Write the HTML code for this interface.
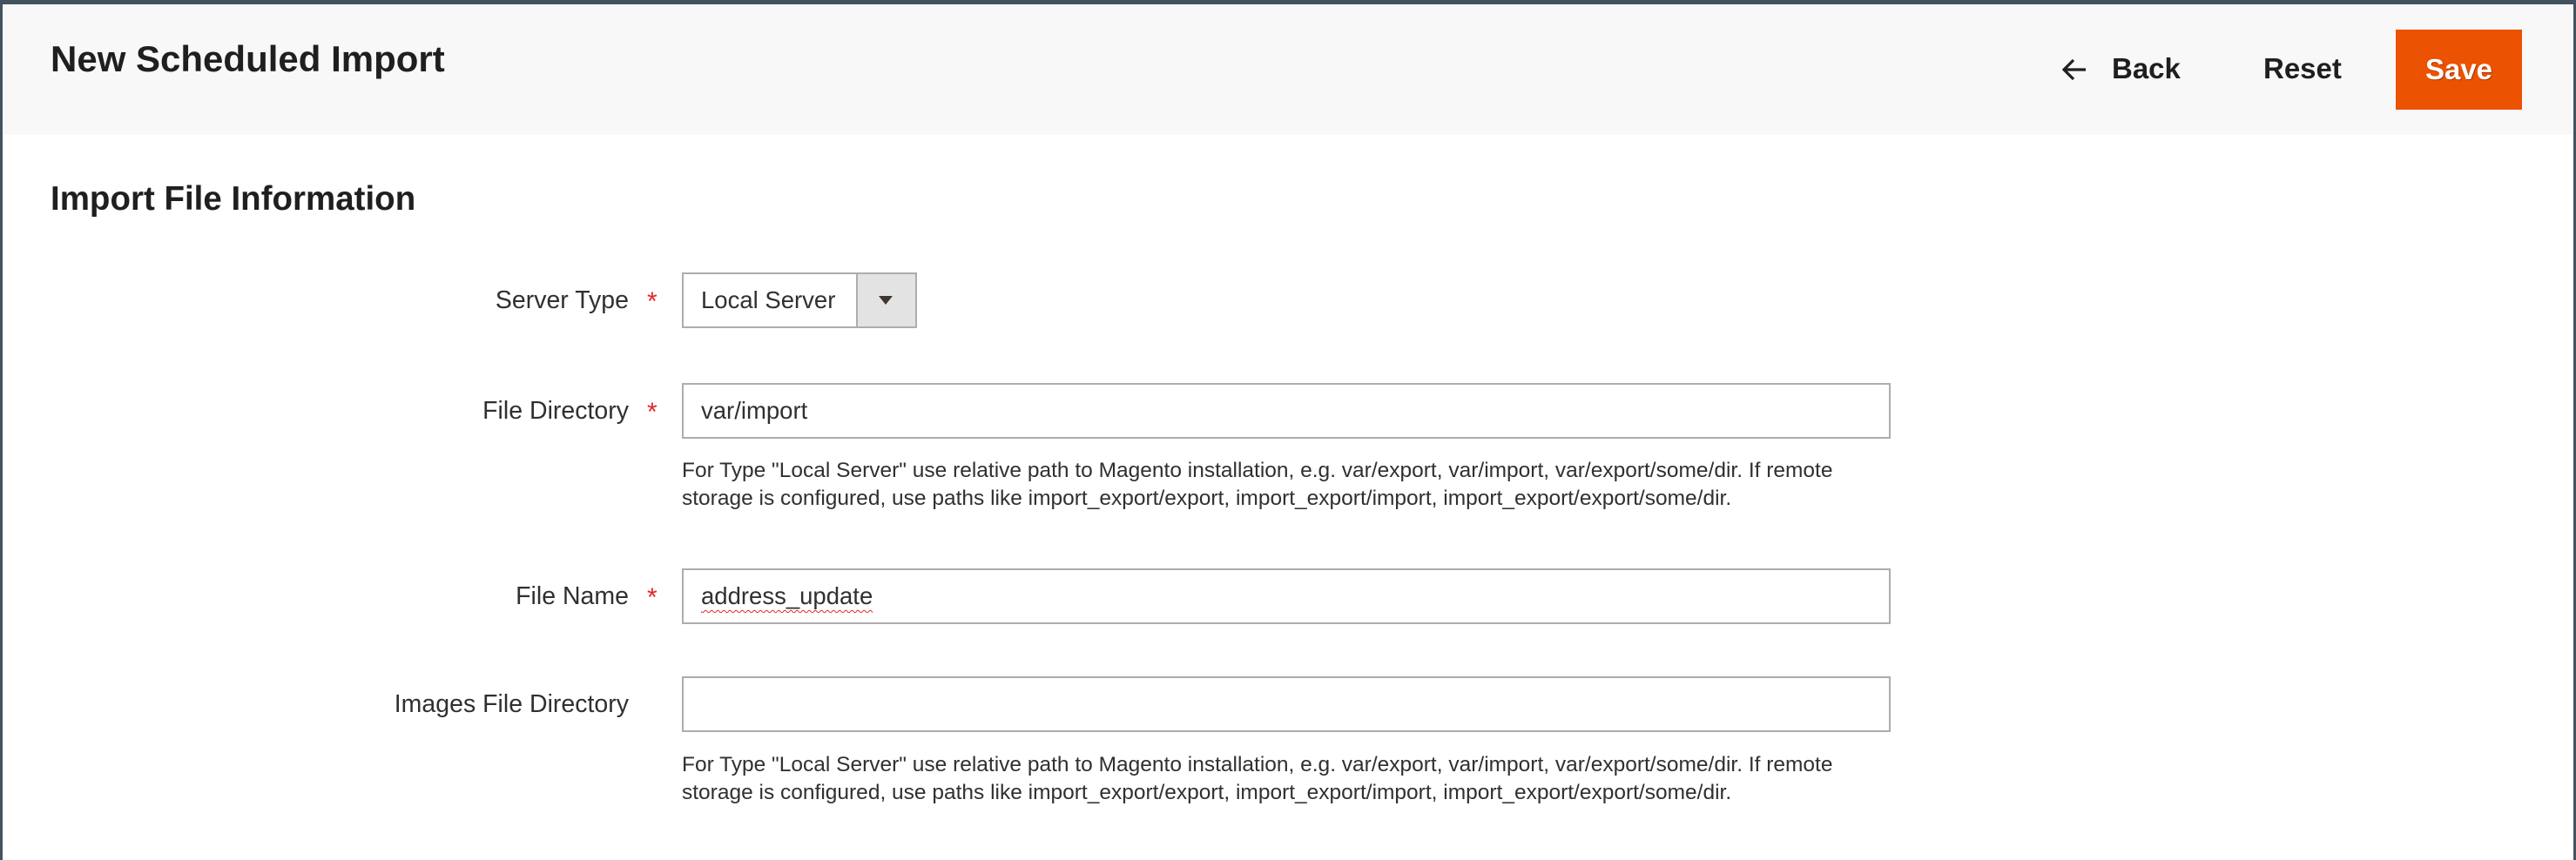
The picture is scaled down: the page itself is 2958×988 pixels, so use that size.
<!DOCTYPE html>
<html><head><meta charset="utf-8"><style>
*{margin:0;padding:0;box-sizing:border-box}
body{width:2958px;height:988px;background:#fff;font-family:"Liberation Sans",sans-serif;color:#303030;position:relative;overflow:hidden}
.frame{position:absolute;left:0;top:0;width:2958px;height:988px;border:3px solid #41535f;border-bottom:none;border-top-width:5px}
.header{position:absolute;left:3px;top:5px;right:3px;height:150px;background:#f8f8f8}
.abs{position:absolute;white-space:nowrap}
h1{position:absolute;left:58px;top:44px;font-size:42px;font-weight:bold;color:#1f1f1f}
h2{position:absolute;left:58px;top:207px;font-size:38.5px;font-weight:bold;color:#1f1f1f}
.btn{font-size:33px;font-weight:bold;color:#1f1f1f;top:60px}
.save{position:absolute;left:2751px;top:34px;width:145px;height:92px;background:#eb5202;color:#fff;font-size:33px;font-weight:bold;text-align:center;line-height:92px;text-shadow:1px 1px 0 #a33a00}
.label{position:absolute;right:2236px;font-size:28.5px;color:#303030;text-align:right}
.req{position:absolute;left:743px;font-size:30px;color:#e22626}
.input{position:absolute;left:783px;width:1388px;height:64px;border:2px solid #adadad;background:#fff;font-size:27.5px;line-height:60px;padding-left:20px;color:#303030}
.note{position:absolute;left:783px;font-size:24.5px;line-height:32px;color:#303030;white-space:nowrap}
</style></head><body>
<div class="header"></div>
<div class="frame"></div>
<h1>New Scheduled Import</h1>
<svg class="abs" style="left:2368px;top:67px" width="28" height="26" viewBox="0 0 28 26"><path d="M27 13H3M13 2L2 13l11 11" fill="none" stroke="#1f1f1f" stroke-width="3.2"/></svg>
<div class="abs btn" style="left:2425px">Back</div>
<div class="abs btn" style="left:2599px">Reset</div>
<div class="save">Save</div>
<h2>Import File Information</h2>

<div class="label" style="top:329px">Server Type</div>
<div class="req" style="top:330px">*</div>
<div class="input" style="top:313px;width:270px">Local Server</div>
<div class="abs" style="left:983px;top:315px;width:68px;height:60px;background:#e3e3e3;border-left:2px solid #adadad"></div>
<svg class="abs" style="left:1009px;top:340px" width="16" height="10"><path d="M0 0h16L8 10z" fill="#41362f"/></svg>

<div class="label" style="top:456px">File Directory</div>
<div class="req" style="top:457px">*</div>
<div class="input" style="top:440px">var/import</div>
<div class="note" style="top:525px">For Type "Local Server" use relative path to Magento installation, e.g. var/export, var/import, var/export/some/dir. If remote<br>storage is configured, use paths like import_export/export, import_export/import, import_export/export/some/dir.</div>

<div class="label" style="top:669px">File Name</div>
<div class="req" style="top:670px">*</div>
<div class="input" style="top:653px"><span style="text-decoration:underline wavy #e22626;text-decoration-thickness:1px;text-underline-offset:6px">address_update</span></div>

<div class="label" style="top:793px">Images File Directory</div>
<div class="input" style="top:777px"></div>
<div class="note" style="top:863px">For Type "Local Server" use relative path to Magento installation, e.g. var/export, var/import, var/export/some/dir. If remote<br>storage is configured, use paths like import_export/export, import_export/import, import_export/export/some/dir.</div>
</body></html>
